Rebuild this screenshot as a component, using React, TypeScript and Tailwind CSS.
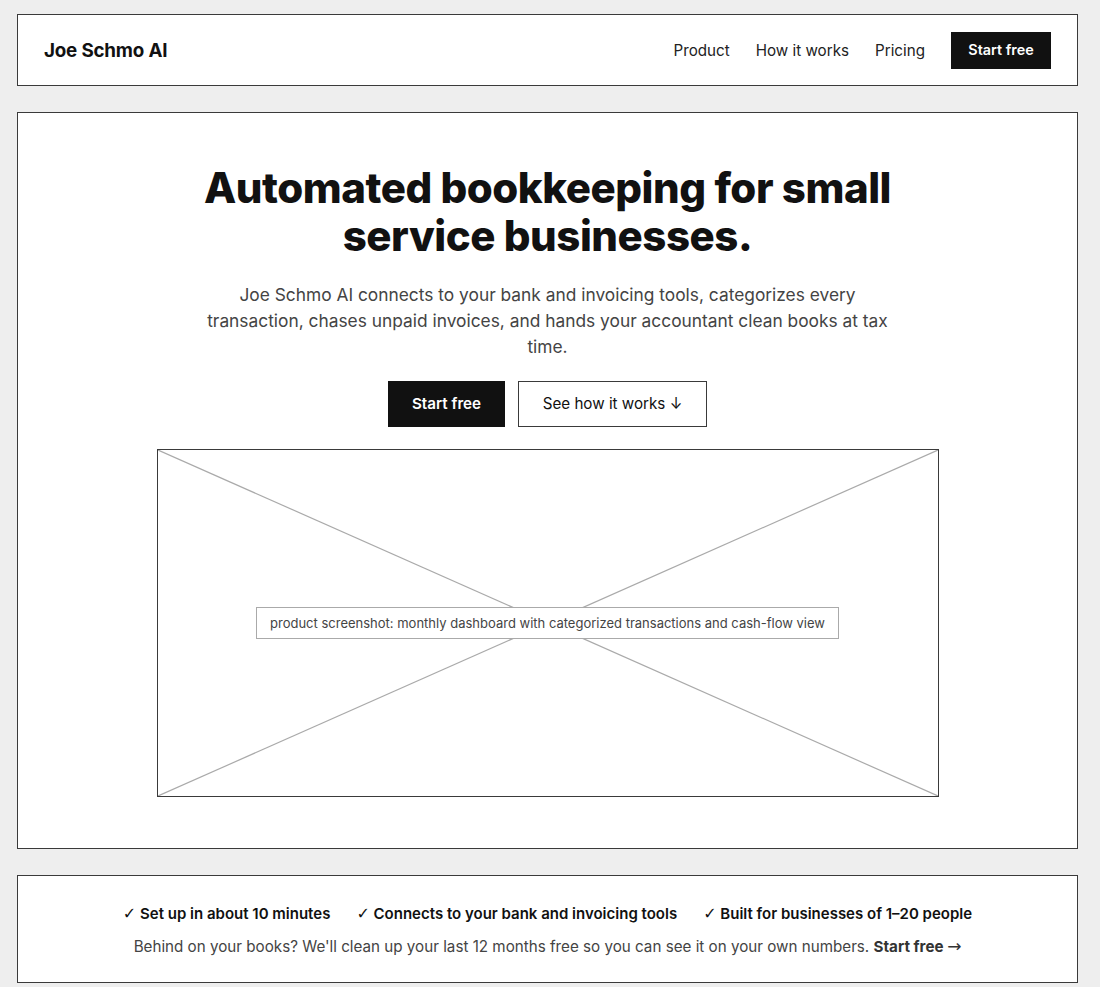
import React from "react";

function Sym({ children, size }: { children: React.ReactNode; size?: string }) {
  return (
    <span style={{ fontFamily: "'DejaVu Sans', sans-serif", fontSize: size }} className="font-normal">
      {children}
    </span>
  );
}

export default function App() {
  const font = { fontFamily: "Inter, 'Noto Sans', Arial, sans-serif" };
  return (
    <div className="min-h-screen bg-[#eeeeee] text-[#111111]" style={font}>
      <div className="ml-[17px] w-[1061px] pt-[14px] pb-[5px] flex flex-col gap-[26px]">
        {/* Nav */}
        <header className="bg-white border border-[#3a3a3a] px-[26px] h-[72px] flex items-center justify-between">
          <div className="text-[18.8px] font-bold tracking-[-0.01em] mt-[2px]">Joe Schmo AI</div>
          <nav className="flex items-center gap-[26px] text-[15.2px]">
            <a className="text-[#222] mt-[2px]">Product</a>
            <a className="text-[#222] mt-[2px]">How it works</a>
            <a className="text-[#222] mt-[2px]">Pricing</a>
            <a className="bg-[#111111] text-white font-semibold text-[14.4px] h-[37px] w-[100px] flex items-center justify-center">
              Start free
            </a>
          </nav>
        </header>

        {/* Hero */}
        <section className="bg-white border border-[#3a3a3a] pt-[51px] pb-[51px] flex flex-col items-center">
          <h1 className="text-[42px] leading-[48px] font-extrabold tracking-[-0.011em] text-center max-w-[760px]">
            Automated bookkeeping for small service businesses.
          </h1>
          <p className="mt-[22px] text-[17.35px] leading-[26px] text-[#444444] text-center max-w-[700px]">
            Joe Schmo AI connects to your bank and invoicing tools, categorizes every transaction, chases unpaid invoices, and hands your accountant clean books at tax time.
          </p>
          <div className="mt-[21px] flex gap-[13px]">
            <button className="bg-[#111111] text-white border border-[#111111] font-semibold text-[15.2px] leading-[24px] h-[46px] w-[117px]">
              Start free
            </button>
            <button className="bg-white text-[#111111] border border-[#3a3a3a] text-[15.2px] leading-[24px] h-[46px] w-[189px]">
              See how it works ↓
            </button>
          </div>
          <div className="mt-[22px] relative w-[782px] h-[348px] border border-[#3a3a3a] bg-white flex items-center justify-center">
            <svg className="absolute inset-0 w-full h-full" preserveAspectRatio="none" viewBox="0 0 780 346">
              <line x1="0" y1="0" x2="780" y2="346" stroke="#aaaaaa" strokeWidth="1.2" vectorEffect="non-scaling-stroke" />
              <line x1="780" y1="0" x2="0" y2="346" stroke="#aaaaaa" strokeWidth="1.2" vectorEffect="non-scaling-stroke" />
            </svg>
            <div className="relative bg-white border border-[#aaaaaa] text-[13px] leading-[18px] text-[#444444] px-[13px] py-[6px] whitespace-nowrap text-center">
              product screenshot: monthly dashboard with categorized transactions and cash-flow view
            </div>
          </div>
        </section>

        {/* Bottom strip */}
        <section className="bg-white border border-[#3a3a3a] pt-[27px] pb-[24px] flex flex-col items-center">
          <div className="flex gap-[26px] text-[15px] leading-[22px] font-semibold">
            <span><Sym size="16px">✓</Sym> Set up in about 10 minutes</span>
            <span><Sym size="16px">✓</Sym> Connects to your bank and invoicing tools</span>
            <span><Sym size="16px">✓</Sym> Built for businesses of 1–20 people</span>
          </div>
          <p className="mt-[10px] text-[15.2px] leading-[22px] text-[#444444]">
            Behind on your books? We'll clean up your last 12 months free so you can see it on your own numbers.{" "}
            <a className="font-bold text-[#333]">Start free <Sym size="17px">→</Sym></a>
          </p>
        </section>
      </div>
    </div>
  );
}
